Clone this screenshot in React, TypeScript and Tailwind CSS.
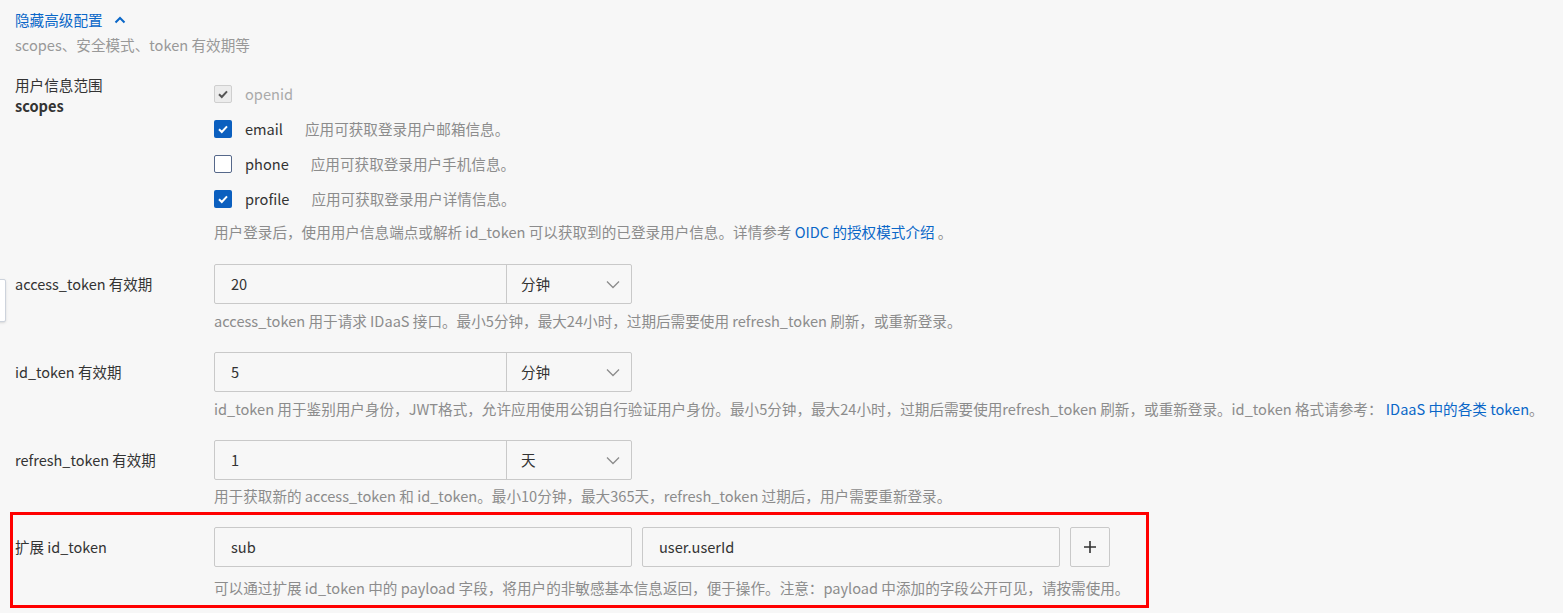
import React from "react";

const font = { fontFamily: '"Noto Sans CJK SC", "Noto Sans", sans-serif' };

function ChevronDown() {
  return (
    <svg width="16" height="16" viewBox="0 0 16 16" fill="none" className="text-[#8c8c8c]">
      <path d="M2 5.5 8 11.5 14 5.5" stroke="currentColor" strokeWidth="1.3" />
    </svg>
  );
}

function Check({ color }: { color: string }) {
  return (
    <svg width="12" height="12" viewBox="0 0 12 12" fill="none">
      <path d="M2 6.2 4.8 9 10 3.4" stroke={color} strokeWidth="2" />
    </svg>
  );
}

function Checkbox({ state }: { state: "on" | "off" | "disabled" }) {
  if (state === "on")
    return (
      <span className="w-[18px] h-[18px] rounded-[2px] bg-[#0b5fbf] flex items-center justify-center">
        <Check color="#fff" />
      </span>
    );
  if (state === "disabled")
    return (
      <span className="w-[18px] h-[18px] rounded-[2px] bg-[#ececec] border border-[#cfcfcf] flex items-center justify-center">
        <Check color="#555" />
      </span>
    );
  return <span className="w-[18px] h-[18px] rounded-[2px] bg-white border border-[#56688a]" />;
}

function Row({ label, children }: { label: React.ReactNode; children: React.ReactNode }) {
  return (
    <div className="flex">
      <div className="w-[199px] shrink-0 h-[40px] flex items-center text-[14.5px] text-[#333]">{label}</div>
      <div className="flex-1">{children}</div>
    </div>
  );
}

function DurationInput({ value, unit }: { value: string; unit: string }) {
  return (
    <div className="flex w-[418px] h-[40px] border border-[#c9c9c9] rounded-[2px]">
      <div className="w-[292px] border-r border-[#c9c9c9] flex items-center pl-[16px] text-[14.6px] text-[#333]">{value}</div>
      <div className="flex-1 flex items-center justify-between pl-[14px] pr-[10px] text-[14.6px] text-[#333]">
        <span>{unit}</span>
        <ChevronDown />
      </div>
    </div>
  );
}

function Help({ children }: { children: React.ReactNode }) {
  return <div className="text-[14.6px] leading-[20px] text-[#8c8c8c] whitespace-nowrap">{children}</div>;
}

export default function App() {
  return (
    <div style={font} className="relative min-h-[613px] bg-[#f7f7f7] pl-[15px] pt-[10px] overflow-hidden">
      <div className="absolute left-[-20px] top-[279px] w-[26px] h-[43px] bg-white border border-[#cdd3dc] rounded-[2px] shadow-sm" />

      <div className="flex items-center gap-[11px] text-[14.6px] leading-[20px] text-[#0a67c8]">
        <span>隐藏高级配置</span>
        <svg width="12" height="12" viewBox="0 0 12 12" fill="none">
          <path d="M1.5 8.5 6 4 10.5 8.5" stroke="currentColor" strokeWidth="2" />
        </svg>
      </div>
      <div className="mt-[5px] text-[14.6px] leading-[20px] text-[#999]">scopes、安全模式、token 有效期等</div>

      <div className="flex mt-[21px]">
        <div className="w-[199px] shrink-0 text-[14.6px] leading-[21px] text-[#333] -mt-[2px]">
          <div>用户信息范围</div>
          <div className="font-bold">scopes</div>
        </div>
        <div className="flex-1">
          <div className="h-[35px] flex items-center">
            <Checkbox state="disabled" />
            <span className="ml-[13px] text-[14.6px] text-[#aaa]">openid</span>
          </div>
          <div className="h-[35px] flex items-center">
            <Checkbox state="on" />
            <span className="ml-[13px] mr-[22px] text-[14.6px] text-[#333]">email</span>
            <span className="text-[14.6px] text-[#8c8c8c]">应用可获取登录用户邮箱信息。</span>
          </div>
          <div className="h-[35px] flex items-center">
            <Checkbox state="off" />
            <span className="ml-[13px] mr-[22px] text-[14.6px] text-[#333]">phone</span>
            <span className="text-[14.6px] text-[#8c8c8c]">应用可获取登录用户手机信息。</span>
          </div>
          <div className="h-[35px] flex items-center">
            <Checkbox state="on" />
            <span className="ml-[13px] mr-[22px] text-[14.6px] text-[#333]">profile</span>
            <span className="text-[14.6px] text-[#8c8c8c]">应用可获取登录用户详情信息。</span>
          </div>
          <div className="mt-[6px]">
            <Help>
              用户登录后，使用用户信息端点或解析 id_token 可以获取到的已登录用户信息。详情参考{" "}
              <span className="text-[#0a67c8]">OIDC 的授权模式介绍</span> 。
            </Help>
          </div>
        </div>
      </div>

      <div className="mt-[22px]">
        <Row label="access_token 有效期">
          <DurationInput value="20" unit="分钟" />
          <div className="mt-[7px] mb-[21px]">
            <Help>access_token 用于请求 IDaaS 接口。最小5分钟，最大24小时，过期后需要使用 refresh_token 刷新，或重新登录。</Help>
          </div>
        </Row>
        <Row label="id_token 有效期">
          <DurationInput value="5" unit="分钟" />
          <div className="mt-[7px] mb-[21px]">
            <Help>
              id_token 用于鉴别用户身份，JWT格式，允许应用使用公钥自行验证用户身份。最小5分钟，最大24小时，过期后需要使用refresh_token 刷新，或重新登录。id_token 格式请参考：{" "}
              <span className="text-[#0a67c8]">IDaaS 中的各类 token</span>。
            </Help>
          </div>
        </Row>
        <Row label="refresh_token 有效期">
          <DurationInput value="1" unit="天" />
          <div className="mt-[6px]">
            <Help>用于获取新的 access_token 和 id_token。最小10分钟，最大365天，refresh_token 过期后，用户需要重新登录。</Help>
          </div>
        </Row>
      </div>

      <div className="ml-[-5px] mt-[6px] w-[1139px] border-[3px] border-[#ff0000] pl-[2px] pt-[12px] pb-[7px]">
        <Row label="扩展 id_token">
          <div className="flex gap-[10px]">
            <div className="w-[418px] h-[40px] border border-[#c9c9c9] rounded-[2px] flex items-center pl-[16px] text-[14.6px] text-[#333]">sub</div>
            <div className="w-[418px] h-[40px] border border-[#c9c9c9] rounded-[2px] flex items-center pl-[16px] text-[14.6px] text-[#333]">user.userId</div>
            <div className="w-[40px] h-[40px] border border-[#c9c9c9] rounded-[2px] flex items-center justify-center">
              <svg width="14" height="14" viewBox="0 0 14 14">
                <path d="M7 1v12M1 7h12" stroke="#333" strokeWidth="1.6" />
              </svg>
            </div>
          </div>
          <div className="mt-[11px]">
            <Help>可以通过扩展 id_token 中的 payload 字段，将用户的非敏感基本信息返回，便于操作。注意：payload 中添加的字段公开可见，请按需使用。</Help>
          </div>
        </Row>
      </div>
    </div>
  );
}
